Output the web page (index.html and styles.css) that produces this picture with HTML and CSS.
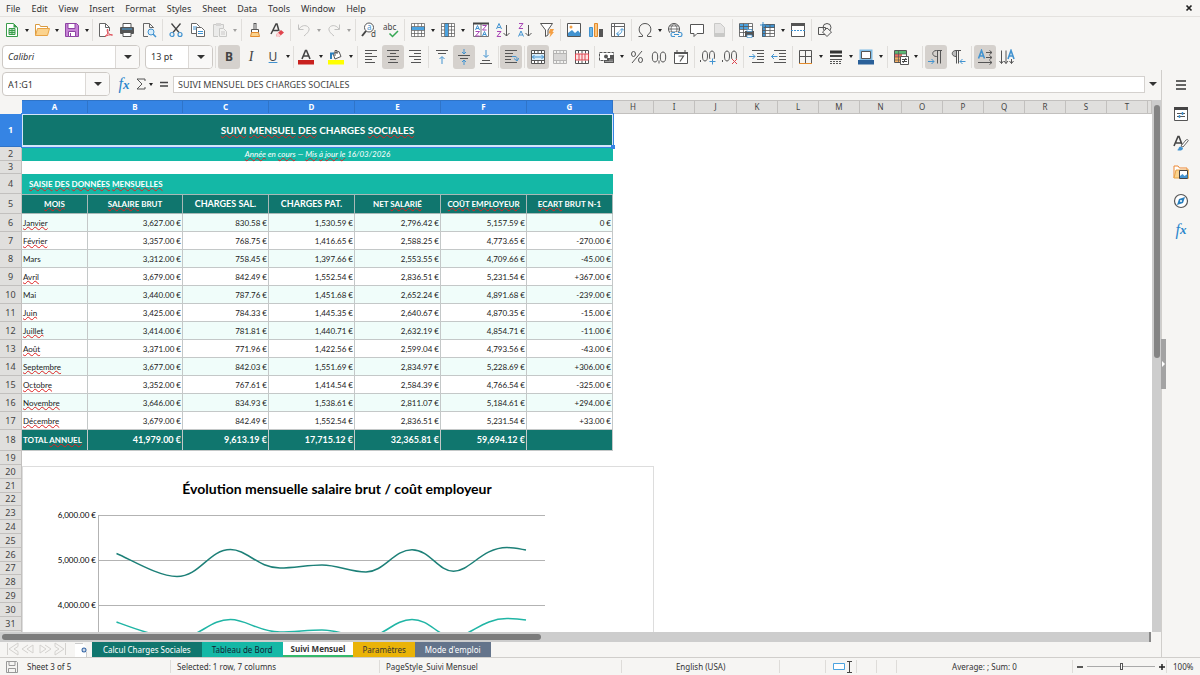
FILE: index.html
```html
<!DOCTYPE html>
<html lang="en">
<head>
    <meta charset="UTF-8">
    <meta name="viewport" content="width=device-width, initial-scale=1.0">
    <title>Suivi Mensuel - Calc</title>
    <link rel="stylesheet" href="styles.css">
</head>
<body>
    <!-- Menu bar -->
    <nav class="menubar">
        <button>File</button>
        <button>Edit</button>
        <button>View</button>
        <button>Insert</button>
        <button>Format</button>
        <button>Styles</button>
        <button>Sheet</button>
        <button>Data</button>
        <button>Tools</button>
        <button>Window</button>
        <button>Help</button>
        <button class="close" aria-label="Close"><svg viewBox="0 0 8 8" width="8" height="8"><path d="M1.5 1.5l5 5M6.5 1.5l-5 5" stroke="#222" stroke-width="1.7"/></svg></button>
    </nav>

    <!-- Standard toolbar -->
    <div class="toolbar toolbar-standard">
        <button class="tool" aria-label="New"><svg class="icon" viewBox="0 0 16 16"><path d="M2.5 1.5h7l4 4v9h-11z" fill="#fff" stroke="#3a9c4b"/><path d="M9.5 1.5v4h4z" fill="#3a9c4b"/><path d="M5 6.5h6v6H5zM5 8.5h6M5 10.5h6M8 6.5v6" fill="#bfe6c4" stroke="#3a9c4b"/></svg></button>
        <button class="drop" aria-label="New options"></button>
        <button class="tool" aria-label="Open"><svg class="icon" viewBox="0 0 16 16"><path d="M1.5 13.5v-11h4l1 2h7v3" fill="#fff" stroke="#d99b40"/><path d="M1.5 13.5l2-7h12l-2 7z" fill="#fbd38e" stroke="#e8a344"/></svg></button>
        <button class="drop" aria-label="Open options"></button>
        <button class="tool" aria-label="Save"><svg class="icon" viewBox="0 0 16 16"><path d="M1.5 1.5h11l2 2v11h-13z" fill="#c783d6" stroke="#8e44a3"/><path d="M4 1.5h7v5H4zM4.5 9.5h7v5h-7z" fill="#fff" stroke="#8e44a3"/><path d="M6 11h1v3H6z" fill="#8e44a3"/></svg></button>
        <button class="drop" aria-label="Save options"></button>
        <span class="sep tight"></span>
        <button class="tool" aria-label="Export as PDF"><svg class="icon" viewBox="0 0 16 16"><path d="M12.5 9V5.5l-4-4h-6v13H8" fill="#fff" stroke="#666"/><path d="M8.5 1.5v4h4" fill="none" stroke="#666"/><path d="M8 14.5c4-3 3-6 2.500-7.500-1.500 3 2 6 5 6-3-.5-5 0-7.500 1.500z" fill="#fff" stroke="#dd4650"/></svg></button>
        <button class="tool" aria-label="Print"><svg class="icon" viewBox="0 0 16 16"><path d="M4 1.5h8v4H4z" fill="#fff" stroke="#555"/><rect x="1" y="5" width="14" height="7" rx="1" fill="#555"/><path d="M3 7h10" stroke="#4ba3e0"/><path d="M4 10.5h8v4H4z" fill="#fff" stroke="#555"/></svg></button>
        <button class="tool" aria-label="Print preview"><svg class="icon" viewBox="0 0 16 16"><path d="M12.5 6V5.5l-4-4h-6v13H7M8.5 1.5v4h4" fill="none" stroke="#666"/><circle cx="10" cy="10" r="3" fill="#d8edfb" stroke="#4293d0"/><path d="M12 12l3 3" stroke="#4293d0" stroke-width="1.5"/></svg></button>
        <span class="sep"></span>
        <button class="tool" aria-label="Cut"><svg class="icon" viewBox="0 0 16 16"><path d="M3.5 1.5l7.500 9M12.5 1.5l-7.500 9" stroke="#444" stroke-width="1.3"/><circle cx="4" cy="12.5" r="2" fill="none" stroke="#4293d0" stroke-width="1.2"/><circle cx="12" cy="12.5" r="2" fill="none" stroke="#4293d0" stroke-width="1.2"/></svg></button>
        <button class="tool" aria-label="Copy"><svg class="icon" viewBox="0 0 16 16"><path d="M1.5 1.5h5l3 3v7h-8z" fill="#fff" stroke="#666"/><path d="M3 5h4M3 7h3" stroke="#4293d0"/><path d="M6.5 5.5h5l3 3v6h-8z" fill="#fff" stroke="#666"/><path d="M8 9.5h5M8 11.5h5" stroke="#4293d0"/></svg></button>
        <button class="tool off" aria-label="Paste"><svg class="icon" viewBox="0 0 16 16"><path d="M6 14.5H1.5v-12h10V6" fill="#ddd" stroke="#888"/><path d="M4 1h5v3H4z" fill="#aaa"/><path d="M7.5 6.5h4l3 3v5h-7zM9 10h4M9 12h4" fill="#eee" stroke="#888"/></svg></button>
        <button class="drop off" aria-label="Paste options"></button>
        <span class="sep"></span>
        <button class="tool" aria-label="Clone formatting"><svg class="icon" viewBox="0 0 16 16"><path d="M8 1v6" stroke="#555" stroke-width="3"/><path d="M8 2v5" stroke="#fff"/><path d="M4.5 7.5h7v3h-7z" fill="#fff" stroke="#555"/><path d="M4.5 10.5h7l1 4h-9z" fill="#fbd38e" stroke="#e38b2c"/></svg></button>
        <button class="tool" aria-label="Clear formatting"><svg class="icon" viewBox="0 0 16 16"><path d="M2 12L7 2h1l2 7M4 8.5h5" fill="none" stroke="#444" stroke-width="1.5"/><path d="M7 12.5l5-4.500 3 2.500-5 4.500H8z" fill="#e0454d"/><path d="M7 12.5l2-2 3 3-2 1.500H8z" fill="#fbd0d2"/></svg></button>
        <span class="sep"></span>
        <button class="tool off" aria-label="Undo"><svg class="icon" viewBox="0 0 16 16"><path d="M2.5 2.5v5h5M3 7c4-6 11-3 10 1-.5 2-2 3.500-5 6" fill="none" stroke="#777"/></svg></button>
        <button class="drop off" aria-label="Undo options"></button>
        <button class="tool off" aria-label="Redo"><svg class="icon" viewBox="0 0 16 16"><path d="M13.5 2.5v5h-5M13 7C9 1 2 4 3 8c.5 2 2 3.500 5 6" fill="none" stroke="#777"/></svg></button>
        <button class="drop off" aria-label="Redo options"></button>
        <span class="sep"></span>
        <button class="tool" aria-label="Find and replace"><svg class="icon" viewBox="0 0 16 16"><circle cx="8" cy="5.5" r="4.5" fill="#fff" stroke="#555"/><path d="M5 9l-4 5" stroke="#444" stroke-width="2"/><text x="6" y="8" class="glyph-a">a</text><text x="10" y="15" class="glyph-d">d</text></svg></button>
        <button class="tool" aria-label="Spelling"><svg class="icon" viewBox="0 0 16 16"><text x="0" y="8" class="glyph-abc">abc</text><path d="M6.5 11.5l3 3L15 9" fill="none" stroke="#35a853" stroke-width="1.5"/></svg></button>
        <span class="sep"></span>
        <button class="tool" aria-label="Row"><svg class="icon" viewBox="0 0 16 16"><path d="M1.5 1.5h13v13h-13z" fill="#fff"/><path d="M1 5h14v3H1z" fill="#4ba3e0"/><path d="M1.5 1.5h13v13h-13zM1.5 4.5h13M1.5 8.5h13M1.5 11.5h13M4.5 1.5v3M8 1.5v3M11.5 1.5v3M4.5 8.5v6M8 8.5v6M11.5 8.5v6" fill="none" stroke="#555" stroke-width=".7"/></svg></button>
        <button class="drop" aria-label="Row options"></button>
        <button class="tool" aria-label="Column"><svg class="icon" viewBox="0 0 16 16"><path d="M1.5 1.5h13v13h-13z" fill="#fff"/><path d="M5 1h3.500v14H5z" fill="#4ba3e0"/><path d="M1.5 1.5h13v13h-13zM4.5 1.5v13M8.5 1.5v13M11.5 1.5v13M1.5 4.5h3M1.5 8h3M1.5 11.5h3M8.5 4.5h6M8.5 8h6M8.5 11.5h6" fill="none" stroke="#555" stroke-width=".7"/></svg></button>
        <button class="drop" aria-label="Column options"></button>
        <span class="sep tight clear"></span>
        <button class="tool" aria-label="Sort"><svg class="icon" viewBox="0 0 16 16"><path d="M.5 1.5h15v13H.5zM8 1.5v13" fill="#fff" stroke="#555" stroke-width=".8"/><path d="M0 1.5h16" stroke="#444" stroke-width="2"/><path d="M2.5 8L4.5 3.500 6.500 8M3 6.5h3M9.5 14L11.5 9.5l2 4.500M10 12.5h3" fill="none" stroke="#4293d0"/><path d="M2.5 9.5h4l-4 4.500h4M9.5 3.5h4l-4 4.500h4" fill="none" stroke="#a846b5"/></svg></button>
        <button class="tool" aria-label="Sort ascending"><svg class="icon" viewBox="0 0 16 16"><path d="M1.5 7L4 1.5 6.500 7M2.5 5.5h3" fill="none" stroke="#4293d0"/><path d="M2 9.5h4l-4 5h4" fill="none" stroke="#a846b5"/><path d="M11.5 3v11M8.5 11l3 3 3-3" fill="none" stroke="#555"/></svg></button>
        <button class="tool" aria-label="Sort descending"><svg class="icon" viewBox="0 0 16 16"><path d="M1.5 14.5L4 9l2.500 5.500M2.5 13h3" fill="none" stroke="#4293d0"/><path d="M2 1.5h4l-4 5h4" fill="none" stroke="#a846b5"/><path d="M11.5 3v11M8.5 11l3 3 3-3" fill="none" stroke="#555"/></svg></button>
        <button class="tool" aria-label="AutoFilter"><svg class="icon" viewBox="0 0 16 16"><path d="M1.5 1.5h12L9 8v5l-2.500 1.500V8z" fill="#fff" stroke="#555"/><path d="M11 7h4l-1.500 3H15l-4.500 5.500 1-4H9.500z" fill="#f5a044"/></svg></button>
        <span class="sep"></span>
        <button class="tool" aria-label="Insert image"><svg class="icon" viewBox="0 0 16 16"><path d="M1.5 1.5h13v13h-13z" fill="#fff" stroke="#555"/><path d="M2 14v-3l4-3 3 3 3-2.500 2.500 3V14z" fill="#4293d0"/><circle cx="5" cy="5" r="1.5" fill="#f5a044"/></svg></button>
        <button class="tool" aria-label="Insert chart"><svg class="icon" viewBox="0 0 16 16"><path d="M1.5 5.5h3v9h-3z" fill="#6db8ea" stroke="#4293d0"/><path d="M6.5 1.5h3v13h-3z" fill="#fbc681" stroke="#e38b2c"/><path d="M11 7h4v8h-4z" fill="#555"/></svg></button>
        <button class="tool" aria-label="Pivot table"><svg class="icon" viewBox="0 0 16 16"><path d="M1.5 1.5h13v13h-13zM1.5 4.5h13M4.5 1.5v13" fill="#fff" stroke="#666"/><path d="M7 12c3 1 5-1 5-5M10 8.5l2-2 2 2M9 14l-2.500-2L9 9.500" fill="none" stroke="#4293d0"/></svg></button>
        <span class="sep"></span>
        <button class="tool" aria-label="Special character"><svg class="icon" viewBox="0 0 16 16"><path d="M1.5 14.5h4v-1.500C0 10 1.500 1.500 8 1.500s8 8.500 2.500 11.500v1.500h4" fill="none" stroke="#555"/></svg></button>
        <button class="drop" aria-label="Special character options"></button>
        <button class="tool" aria-label="Hyperlink"><svg class="icon" viewBox="0 0 16 16"><circle cx="7" cy="7" r="5.5" fill="#fff" stroke="#555"/><path d="M1.5 7h11M2.5 4h9M2.5 10h9M7 1.5c-4 4-4 7 0 11M7 1.5c4 4 4 7 0 11" fill="none" stroke="#555" stroke-width=".8"/><path d="M3 10h13v5H3z" fill="#f6f5f3"/><path d="M8 10.5H5.500c-2 0-2 4 0 4H8M11 10.5h2.500c2 0 2 4 0 4H11M7 12.5h5" fill="none" stroke="#4293d0" stroke-width="1.2"/></svg></button>
        <button class="tool" aria-label="Comment"><svg class="icon" viewBox="0 0 16 16"><path d="M1.5 2.5h13v9H8l-3 3v-3H1.500z" fill="#fff" stroke="#555"/></svg></button>
        <button class="tool off" aria-label="Headers and footers"><svg class="icon" viewBox="0 0 16 16"><path d="M3.5 1.5h6l4 4v9h-10z" fill="#ccc" stroke="#888"/><path d="M4 11h9v3H4z" fill="#888"/></svg></button>
        <span class="sep"></span>
        <button class="tool" aria-label="Print area"><svg class="icon" viewBox="0 0 16 16"><path d="M1.5 1.5h13v13h-13z" fill="#fff"/><path d="M1 2h9v5H1z" fill="#4ba3e0"/><path d="M1.5 1.5h13v13h-13zM1.5 4.5h13M1.5 7.5h13M1.5 10.5h13M5.5 1.5v13M10.5 1.5v13" fill="none" stroke="#555" stroke-width=".8"/><path d="M7 9h9v6H7z" fill="#555"/><path d="M9 7.5h5v2H9zM9 13h5v2.500H9z" fill="#fff" stroke="#4293d0" stroke-width=".7"/></svg></button>
        <button class="tool" aria-label="Freeze rows and columns"><svg class="icon" viewBox="0 0 16 16"><path d="M2.5 2.5h13v13h-13z" fill="#fff"/><path d="M2 2h13v4H2zM2 5h3v10H2z" fill="#4293d0"/><path d="M2.5 2.5h12v12h-12zM2.5 5.5h12M2.5 8.5h12M2.5 11.5h12M5.5 2.5v12M10 2.5v12" fill="none" stroke="#555" stroke-width=".8"/><path d="M3 0v6M0 3h6" stroke="#4293d0"/></svg></button>
        <button class="drop" aria-label="Freeze options"></button>
        <button class="tool" aria-label="Split window"><svg class="icon" viewBox="0 0 16 16"><path d="M1.5 1.5h13v13h-13z" fill="#fff" stroke="#555"/><path d="M1 2.5h14" stroke="#555" stroke-width="3"/><path d="M1 8.5h14" stroke="#4293d0" stroke-dasharray="2 1"/></svg></button>
        <span class="sep"></span>
        <button class="tool" aria-label="Show draw functions"><svg class="icon" viewBox="0 0 16 16"><circle cx="10" cy="5.5" r="4" fill="none" stroke="#555"/><path d="M1.5 5.5h7v7h-7z" fill="none" stroke="#555"/><path d="M10 6l4.500 4L10 14.500 5.500 10z" fill="#f6f5f3" stroke="#555"/></svg></button>
    </div>

    <!-- Formatting toolbar -->
    <div class="toolbar">
        <div class="combo combo-font">
            <input type="text" value="Calibri" aria-label="Font name">
            <button aria-label="Font list"></button>
        </div>
        <div class="combo combo-size">
            <input type="text" value="13 pt" aria-label="Font size">
            <button aria-label="Size list"></button>
        </div>
        <span class="sep"></span>
        <button class="tool on letter" aria-label="Bold"><b>B</b></button>
        <button class="tool letter" aria-label="Italic"><i>I</i></button>
        <button class="tool letter" aria-label="Underline"><u>U</u></button>
        <button class="drop" aria-label="Underline options"></button>
        <span class="sep tight"></span>
        <button class="tool" aria-label="Font color"><svg class="icon" viewBox="0 0 16 16"><path d="M4 10L7.5 1.500h1L12 10M5.5 7h5" fill="none" stroke="#444" stroke-width="1.6"/><path d="M0 11h16v4.500H0z" fill="#c9211e"/></svg></button>
        <button class="drop" aria-label="Font colors"></button>
        <button class="tool" aria-label="Background color"><svg class="icon" viewBox="0 0 16 16"><path d="M5 4.5l6-2 2 5-6 2.500z" fill="#fff" stroke="#555"/><path d="M7 7V1.500h2V5" fill="none" stroke="#555"/><path d="M3 10V4.500h3" fill="none" stroke="#2a7fbd" stroke-width="2"/><path d="M0 11h16v4.500H0z" fill="#ff0"/></svg></button>
        <button class="drop" aria-label="Background colors"></button>
        <span class="sep"></span>
        <button class="tool" aria-label="Align left"><svg class="icon" viewBox="0 0 16 16"><path d="M2 1.5h12M2 4.5h7M2 7.5h12M2 10.5h7M2 13.5h10" stroke="#555"/></svg></button>
        <button class="tool on" aria-label="Center horizontally"><svg class="icon" viewBox="0 0 16 16"><path d="M2 1.5h12M5 4.5h6M2 7.5h12M5 10.5h6M3 13.5h10" stroke="#555"/></svg></button>
        <button class="tool" aria-label="Align right"><svg class="icon" viewBox="0 0 16 16"><path d="M2 1.5h12M7 4.5h7M2 7.5h12M7 10.5h7M4 13.5h10" stroke="#555"/></svg></button>
        <span class="sep"></span>
        <button class="tool" aria-label="Align top"><svg class="icon" viewBox="0 0 16 16"><path d="M2 1.5h12M4 4.5h8" stroke="#555"/><path d="M8 15V8M5.5 10L8 7.500l2.500 2.500" fill="none" stroke="#4293d0"/></svg></button>
        <button class="tool on" aria-label="Center vertically"><svg class="icon" viewBox="0 0 16 16"><path d="M2 6.5h12M4 9.5h8" stroke="#555"/><path d="M8 0v5M6 3l2 2 2-2M8 16v-5M6 13l2-2 2 2" fill="none" stroke="#4293d0"/></svg></button>
        <button class="tool" aria-label="Align bottom"><svg class="icon" viewBox="0 0 16 16"><path d="M4 11.5h8M2 14.5h12" stroke="#555"/><path d="M8 1v7M5.5 6L8 8.500 10.500 6" fill="none" stroke="#4293d0"/></svg></button>
        <span class="sep tight"></span>
        <button class="tool on" aria-label="Wrap text"><svg class="icon" viewBox="0 0 16 16"><path d="M2 1.5h12M2 4.5h8M2 7.5h7M2 10.5h6M2 13.5h12" stroke="#555"/><path d="M9 7.5h3c2 0 2 1 2 4M11 9.5l3 2.500 2-3" fill="none" stroke="#4293d0"/></svg></button>
        <span class="sep"></span>
        <button class="tool on" aria-label="Merge and center"><svg class="icon" viewBox="0 0 16 16"><path d="M1.5 1.5h13v13h-13zM1.5 4.5h13M1.5 11.5h13M4.5 1.5v3M8 1.5v3M11.5 1.5v3M4.5 11.5v3M8 11.5v3M11.5 11.5v3" fill="#fff" stroke="#555"/><path d="M2 5h12v6H2z" fill="#d8edfb"/><path d="M2 8h12M4.5 6l-2 2 2 2M11.5 6l2 2-2 2" fill="none" stroke="#4293d0"/></svg></button>
        <button class="tool off" aria-label="Merge cells"><svg class="icon" viewBox="0 0 16 16"><path d="M1.5 1.5h13v13h-13zM1.5 4.5h13M1.5 11.5h13M4.5 1.5v3M8 1.5v3M11.5 1.5v3M4.5 11.5v3M8 11.5v3M11.5 11.5v3" fill="#eee" stroke="#555"/><path d="M2 5h12v6H2z" fill="#aaa"/></svg></button>
        <button class="tool" aria-label="Unmerge cells"><svg class="icon" viewBox="0 0 16 16"><path d="M1.5 1.5h13v13h-13zM4.5 1.5v3M8 1.5v3M11.5 1.5v3M4.5 11.5v3M8 11.5v3M11.5 11.5v3" fill="#fff" stroke="#555"/><path d="M1.5 5h13v6h-13zM5 5v6M8 5v6M11 5v6" fill="#fde4e4" stroke="#dd4650"/></svg></button>
        <span class="sep tight"></span>
        <button class="tool" aria-label="Currency"><svg class="icon" viewBox="0 0 16 16"><path d="M.5 3.500h14v8H.5z" fill="#fff" stroke="#555" stroke-dasharray="3 1"/><circle cx="7" cy="7.5" r="2" fill="#555"/><path d="M5 11h3V9h3V6h4v8H5z" fill="#555"/><path d="M6 12.5h8M10 11h4" stroke="#bbb" stroke-width=".7"/></svg></button>
        <button class="drop" aria-label="Currency options"></button>
        <button class="tool" aria-label="Percent"><svg class="icon" viewBox="0 0 16 16"><path d="M13 2L3 14" stroke="#555"/><ellipse cx="4.5" cy="5" rx="2" ry="2.5" fill="none" stroke="#555"/><ellipse cx="11.5" cy="11" rx="2" ry="2.5" fill="none" stroke="#555"/></svg></button>
        <button class="tool" aria-label="Number"><svg class="icon" viewBox="0 0 16 16"><ellipse cx="4" cy="8" rx="2.7" ry="5" fill="none" stroke="#555"/><ellipse cx="12" cy="8" rx="2.7" ry="5" fill="none" stroke="#555"/><path d="M8 11.5v3" stroke="#555"/></svg></button>
        <button class="tool" aria-label="Date"><svg class="icon" viewBox="0 0 16 16"><path d="M1.5 3.5h13v11h-13z" fill="#fff" stroke="#555"/><path d="M1 4h14" stroke="#555" stroke-width="2"/><path d="M4 1v3M12 1v3" stroke="#555"/><path d="M5.5 7h5L7 12.500" fill="none" stroke="#555" stroke-width="1.2"/></svg></button>
        <span class="sep"></span>
        <button class="tool" aria-label="Add decimal place"><svg class="icon" viewBox="0 0 16 16"><path d="M.5 11v2" stroke="#555"/><ellipse cx="5" cy="7" rx="2.5" ry="5" fill="none" stroke="#555"/><ellipse cx="12" cy="7" rx="2.5" ry="5" fill="none" stroke="#555"/><path d="M9 10h7v6H9z" fill="#f6f5f3"/><path d="M12.5 9.5v6M9.5 12.5h6" stroke="#4293d0"/></svg></button>
        <button class="tool" aria-label="Delete decimal place"><svg class="icon" viewBox="0 0 16 16"><path d="M.5 11v2" stroke="#555"/><ellipse cx="5" cy="7" rx="2.5" ry="5" fill="none" stroke="#555"/><ellipse cx="12" cy="7" rx="2.5" ry="5" fill="none" stroke="#555"/><path d="M9 10h7v6H9z" fill="#f6f5f3"/><path d="M10 10l5 5M15 10l-5 5" stroke="#dd4650"/></svg></button>
        <span class="sep"></span>
        <button class="tool" aria-label="Increase indent"><svg class="icon" viewBox="0 0 16 16"><path d="M3 1.5h12M8 4.5h7M8 7.5h7M8 10.5h7M3 13.5h12" stroke="#555"/><path d="M0 7.5h6M3.5 5L6 7.500 3.500 10" fill="none" stroke="#4293d0"/></svg></button>
        <button class="tool" aria-label="Decrease indent"><svg class="icon" viewBox="0 0 16 16"><path d="M3 1.5h12M8 4.5h7M8 7.5h7M8 10.5h7M3 13.5h12" stroke="#555"/><path d="M6.5 7.5h-6M3 5L.5 7.500 3 10" fill="none" stroke="#4293d0"/></svg></button>
        <span class="sep"></span>
        <button class="tool" aria-label="Borders"><svg class="icon" viewBox="0 0 16 16"><path d="M1.5 14V1.500h12V14M1.5 7.5h12M7.5 1.5V14" fill="none" stroke="#555"/><path d="M1 14.5h13" stroke="#e38b2c"/></svg></button>
        <button class="drop" aria-label="Border options"></button>
        <button class="tool" aria-label="Border style"><svg class="icon" viewBox="0 0 16 16"><path d="M2 3h12" stroke="#333" stroke-width="3"/><path d="M2 7h12" stroke="#444" stroke-width="2"/><path d="M2 10.5h12" stroke="#555"/><path d="M2 12.5h12M2 14.5h12" stroke="#555" stroke-dasharray="2 1"/></svg></button>
        <button class="drop" aria-label="Border styles"></button>
        <button class="tool" aria-label="Border color"><svg class="icon" viewBox="0 0 16 16"><path d="M2.5 1.5h11v9h-11z" fill="#fff" stroke="#7fbce6" stroke-width="2"/><path d="M3.5 2.5h9v7h-9z" fill="none" stroke="#555"/><path d="M0 11h16v4.500H0z" fill="#2a6099"/></svg></button>
        <button class="drop" aria-label="Border colors"></button>
        <span class="sep"></span>
        <button class="tool" aria-label="Conditional formatting"><svg class="icon" viewBox="0 0 16 16"><path d="M1.5 1.5h12v12h-12z" fill="#fff" stroke="#555"/><path d="M2 2h11v3H2z" fill="#5cb874"/><path d="M2 5h7v3H2z" fill="#ee6c66"/><path d="M2 8h5v5H2z" fill="#f7b266"/><path d="M5.5 1.5v12M1.5 5h12M1.5 8h12M1.5 11h12" fill="none" stroke="#555" stroke-width=".7"/><path d="M7.5 7.5h8v8h-8z" fill="#fff" stroke="#555"/><path d="M9 10.5h5M9 12.5h5M13 9l-3 5" stroke="#444"/></svg></button>
        <button class="drop" aria-label="Conditional options"></button>
        <span class="sep"></span>
        <button class="tool on" aria-label="Left-to-right"><svg class="icon" viewBox="0 0 16 16"><path d="M14 1.5H8.500c-5 0-5 6 0 6h1M9.5 1.5v13M12.5 1.5v13" fill="none" stroke="#555"/><path d="M0 12.5h6M3.5 10L6 12.500 3.500 15" fill="none" stroke="#4293d0"/></svg></button>
        <button class="tool" aria-label="Right-to-left"><svg class="icon" viewBox="0 0 16 16"><path d="M6.5 1.500C1 1.500 1 7.500 6.500 7.500z" fill="#bbb"/><path d="M11 1.5H6c-5 0-5 6 0 6M6.5 1.5v13M8.5 1.5v13" fill="none" stroke="#555"/><path d="M15.5 12.5H10M12.5 10L10 12.500l2.500 2.500" fill="none" stroke="#4293d0"/></svg></button>
        <span class="sep"></span>
        <button class="tool on" aria-label="Text direction from left to right"><svg class="icon" viewBox="0 0 16 16"><path d="M1.5 9.5L4.500 1.500 7.500 9.500M2.5 7h4" fill="none" stroke="#4293d0" stroke-width="1.6"/><path d="M9 3.5h6M9 8.5h6M1 13.5h14M12.5 1.5l2.500 2-2.500 2M12.5 6.500L15 8.500l-2.500 2M12.5 11.5l2.500 2-2.500 2" fill="none" stroke="#555"/></svg></button>
        <button class="tool" aria-label="Text direction from top to bottom"><svg class="icon" viewBox="0 0 16 16"><path d="M9 10L12 1.500 15 10M10 7h4" fill="none" stroke="#4293d0" stroke-width="1.6"/><path d="M2.5 1.5v13M7 1.5v13M12.5 10v4.500M.5 12l2 2.500 2-2.500M5 12l2 2.500L9 12M10.5 12l2 2.500 2-2.500" fill="none" stroke="#555"/></svg></button>
    </div>

    <div class="work">
        <main class="main">
            <!-- Name box and input line -->
            <div class="formula-bar">
                <div class="combo combo-name">
                    <input type="text" value="A1:G1" aria-label="Name box">
                    <button aria-label="Named ranges"></button>
                </div>
                <button class="fx" aria-label="Function wizard"><i>f</i><i>x</i></button>
                <button class="small-tool" aria-label="Sum"><svg width="10" height="14" viewBox="0 0 10 14"><path d="M9 4V2H1l5 5-5 5h8v-2" fill="none" stroke="#555"/></svg></button>
                <button class="drop" aria-label="Sum options"></button>
                <button class="small-tool" aria-label="Formula"><svg width="10" height="14" viewBox="0 0 10 14"><path d="M1 5.5h8M1 9h8" stroke="#444" stroke-width="1.5"/></svg></button>
                <input class="formula-input" type="text" value="SUIVI MENSUEL DES CHARGES SOCIALES" aria-label="Input line">
                <button class="expand" aria-label="Expand formula bar"></button>
            </div>

            <div class="sheet-area">
                <div class="sheet">
                    <table class="grid">
                        <colgroup>
                            <col class="c-head"><col class="c-a"><col class="c-b"><col class="c-data"><col class="c-data"><col class="c-data"><col class="c-data"><col class="c-data">
                            <col class="c-empty"><col class="c-empty"><col class="c-empty-wide"><col class="c-empty"><col class="c-empty"><col class="c-empty"><col class="c-empty-wide"><col class="c-empty"><col class="c-empty"><col class="c-empty"><col class="c-empty"><col class="c-empty"><col class="c-empty"><col>
                        </colgroup>
                        <thead>
                            <tr class="letters">
                                <td></td>
                                <th class="sel">A</th><th class="sel">B</th><th class="sel">C</th><th class="sel">D</th><th class="sel">E</th><th class="sel">F</th><th class="sel">G</th>
                                <th>H</th><th>I</th><th>J</th><th>K</th><th>L</th><th>M</th><th>N</th><th>O</th><th>P</th><th>Q</th><th>R</th><th>S</th><th>T</th><th></th>
                            </tr>
                        </thead>
                        <tbody>
                            <tr class="r-title"><th class="sel">1</th><td colspan="7" class="title"><s>SUIVI</s> <s>MENSUEL</s> <s>DES</s> CHARGES <s>SOCIALES</s></td></tr>
                            <tr><th>2</th><td colspan="7" class="subtitle"><s>Année</s> en <s>cours</s> — <s>Mis</s> <s>à</s> <s>jour</s> <s>le</s> 16/03/2026</td></tr>
                            <tr class="r-short"><th>3</th></tr>
                            <tr class="r-head"><th>4</th><td colspan="7" class="section"><s>SAISIE</s> <s>DES</s> <s>DONNÉES</s> <s>MENSUELLES</s></td></tr>
                            <tr class="r-head heads"><th>5</th><td><s>MOIS</s></td><td><s>SALAIRE</s> BRUT</td><td class="big">CHARGES SAL.</td><td class="big">CHARGES PAT.</td><td>NET <s>SALARIÉ</s></td><td><s>COÛT</s> <s>EMPLOYEUR</s></td><td><s>ECART</s> BRUT N-1</td></tr>
                            <tr class="data"><th>6</th><td><s>Janvier</s></td><td>3,627.00 €</td><td>830.58 €</td><td>1,530.59 €</td><td>2,796.42 €</td><td>5,157.59 €</td><td>0 €</td></tr>
                            <tr class="data"><th>7</th><td><s>Février</s></td><td>3,357.00 €</td><td>768.75 €</td><td>1,416.65 €</td><td>2,588.25 €</td><td>4,773.65 €</td><td>-270.00 €</td></tr>
                            <tr class="data"><th>8</th><td>Mars</td><td>3,312.00 €</td><td>758.45 €</td><td>1,397.66 €</td><td>2,553.55 €</td><td>4,709.66 €</td><td>-45.00 €</td></tr>
                            <tr class="data"><th>9</th><td><s>Avril</s></td><td>3,679.00 €</td><td>842.49 €</td><td>1,552.54 €</td><td>2,836.51 €</td><td>5,231.54 €</td><td>+367.00 €</td></tr>
                            <tr class="data"><th>10</th><td>Mai</td><td>3,440.00 €</td><td>787.76 €</td><td>1,451.68 €</td><td>2,652.24 €</td><td>4,891.68 €</td><td>-239.00 €</td></tr>
                            <tr class="data"><th>11</th><td><s>Juin</s></td><td>3,425.00 €</td><td>784.33 €</td><td>1,445.35 €</td><td>2,640.67 €</td><td>4,870.35 €</td><td>-15.00 €</td></tr>
                            <tr class="data"><th>12</th><td><s>Juillet</s></td><td>3,414.00 €</td><td>781.81 €</td><td>1,440.71 €</td><td>2,632.19 €</td><td>4,854.71 €</td><td>-11.00 €</td></tr>
                            <tr class="data"><th>13</th><td><s>Août</s></td><td>3,371.00 €</td><td>771.96 €</td><td>1,422.56 €</td><td>2,599.04 €</td><td>4,793.56 €</td><td>-43.00 €</td></tr>
                            <tr class="data"><th>14</th><td><s>Septembre</s></td><td>3,677.00 €</td><td>842.03 €</td><td>1,551.69 €</td><td>2,834.97 €</td><td>5,228.69 €</td><td>+306.00 €</td></tr>
                            <tr class="data"><th>15</th><td><s>Octobre</s></td><td>3,352.00 €</td><td>767.61 €</td><td>1,414.54 €</td><td>2,584.39 €</td><td>4,766.54 €</td><td>-325.00 €</td></tr>
                            <tr class="data"><th>16</th><td><s>Novembre</s></td><td>3,646.00 €</td><td>834.93 €</td><td>1,538.61 €</td><td>2,811.07 €</td><td>5,184.61 €</td><td>+294.00 €</td></tr>
                            <tr class="data"><th>17</th><td><s>Décembre</s></td><td>3,679.00 €</td><td>842.49 €</td><td>1,552.54 €</td><td>2,836.51 €</td><td>5,231.54 €</td><td>+33.00 €</td></tr>
                            <tr class="total"><th>18</th><td>TOTAL <s>ANNUEL</s></td><td>41,979.00 €</td><td>9,613.19 €</td><td>17,715.12 €</td><td>32,365.81 €</td><td>59,694.12 €</td><td></td></tr>
                            <tr><th>19</th></tr>
                            <tr><th>20</th></tr>
                            <tr><th>21</th></tr>
                            <tr class="r-short"><th>22</th></tr>
                            <tr><th>23</th></tr>
                            <tr><th>24</th></tr>
                            <tr><th>25</th></tr>
                            <tr><th>26</th></tr>
                            <tr class="r-short"><th>27</th></tr>
                            <tr><th>28</th></tr>
                            <tr><th>29</th></tr>
                            <tr><th>30</th></tr>
                            <tr><th>31</th></tr>
                            <tr><th></th></tr>
                        </tbody>
                    </table>

                    <!-- Chart floating over the cells -->
                    <svg class="chart" viewBox="22 466 632 200" width="632" height="200">
                        <rect x="22.5" y="466.5" width="631" height="210" fill="#fff" stroke="#ddd"/>
                        <text x="337" y="494" class="chart-title">Évolution mensuelle salaire brut / coût employeur</text>
                        <path d="M98 515.5h447M98 560.5h447M98 605.5h447M98.5 515v160" fill="none" stroke="#b3b3b3"/>
                        <text x="96" y="518" class="chart-label">6,000.00 €</text>
                        <text x="96" y="563" class="chart-label">5,000.00 €</text>
                        <text x="96" y="608" class="chart-label">4,000.00 €</text>
                        <path class="line-cost" d="M116.5 553.5C130 559 158 576.5 177 576.5C200 576.5 209 549.5 230.5 549.5C247 549.5 258 568 280 568C294 568 308 565 322 565C338 565 350 572 366 572C384 572 394 549.7 412 549.7C430 549.7 438 571.3 453.5 571.3C470 571.3 482 547.5 507 547.5C513 547.5 520 549 526 550"/>
                        <path class="line-gross" d="M116.5 622C130 627 158 638 177 638C200 638 209 619.5 230.5 619.5C247 619.5 258 632 280 632C294 632 308 630 322 630C338 630 350 637 366 637C384 637 394 619.5 412 619.5C430 619.5 438 637 453.5 637C470 637 482 618.5 507 618.5C513 618.5 520 619 526 620"/>
                    </svg>
                </div>
                <div class="vscroll"><div class="vthumb"></div></div>
            </div>

            <div class="hscroll"><div class="hthumb"></div></div>

            <!-- Sheet tabs -->
            <div class="tabs">
                <div class="tab-nav" aria-hidden="true">
                    <svg width="61" height="14" viewBox="0 0 61 14"><path d="M1.5 1v12M12 1L3 7l9 6V9.500L8 7l4-2.500zM22 3l-6 4 6 4M27 3l-6 4 6 4V3M34 3l6 4-6 4V3M39 3l6 4-6 4M49 1l9 6-9 6V9.500L53 7l-4-2.500zM59.5 1v12" fill="none" stroke="#d4d2cf"/></svg>
                </div>
                <button class="tab-add" aria-label="Add sheet"><svg width="12" height="14" viewBox="0 0 12 14"><path d="M0 0h8l3 4v10H0z" fill="#fff"/><path d="M0 .5h8M11.5 9v5" stroke="#ccc"/><circle cx="9" cy="7" r="2.5" fill="#3465a4"/><path d="M9 5.500v3M7.5 7h3" stroke="#fff"/></svg></button>
                <button class="tab tab-dark">Calcul Charges Sociales</button>
                <button class="tab tab-teal">Tableau de Bord</button>
                <button class="tab tab-active">Suivi Mensuel</button>
                <button class="tab tab-yellow">Paramètres</button>
                <button class="tab tab-slate">Mode d'emploi</button>
            </div>
        </main>

        <!-- Sidebar deck buttons -->
        <aside class="sidebar">
            <button aria-label="Sidebar settings"><svg class="icon" viewBox="0 0 16 16"><path d="M3 4h10M3 8h10M3 12h10" stroke="#333" stroke-width="1.5"/></svg></button>
            <button aria-label="Properties"><svg class="icon" viewBox="0 0 16 16"><path d="M1.5 1.5h13v13h-13z" fill="#fff" stroke="#555"/><path d="M1 2.5h14" stroke="#444" stroke-width="3"/><path d="M4 7.5h8M4 10.5h8" stroke="#555"/><path d="M9.5 6v3M6.5 9v3" stroke="#4293d0" stroke-width="1.5"/></svg></button>
            <button aria-label="Styles"><svg class="icon" viewBox="0 0 16 16"><path d="M1 11L5 1.500h1l3 8M3 8h5" fill="none" stroke="#444" stroke-width="1.6"/><path d="M8 11l5-6c1-1 3 0 2 1l-5 6z" fill="#fff" stroke="#666"/><path d="M4 15c2 0 1-3 3.500-3.500L10 13c0 3-4 3-6 2z" fill="#4293d0"/></svg></button>
            <button aria-label="Gallery"><svg class="icon" viewBox="0 0 16 16"><path d="M1 14V2h4l1.500 2H14v3" fill="#fff" stroke="#ed8733"/><path d="M1 14l2-8h13v8z" fill="#fbd38e" stroke="#e8a344"/><path d="M6.5 6.5h8v8h-8z" fill="#fff" stroke="#444"/><path d="M7 14v-2l2.500-2 2 2 3-2v4z" fill="#4293d0"/></svg></button>
            <button aria-label="Navigator"><svg class="icon" viewBox="0 0 16 16"><circle cx="8" cy="8" r="6.5" fill="#fff" stroke="#555" stroke-width="1.2"/><path d="M12 4l-2 6-6 2 2-6z" fill="#2a7fbd"/><circle cx="8" cy="8" r="1" fill="#fff"/></svg></button>
            <button class="fx" aria-label="Functions"><i>f</i><i>x</i></button>
            <div class="handle"></div>
        </aside>
    </div>

    <!-- Status bar -->
    <footer class="status">
        <div class="st-sheet"><svg class="save-icon" viewBox="0 0 12 12" width="12" height="12"><path d="M.5.5h10l1 1v10H.5zM3 .5h6v4H3zM2.5 7.5h7v4h-7z" fill="none" stroke="#999"/></svg>Sheet 3 of 5</div>
        <div class="st-selected">Selected: 1 row, 7 columns</div>
        <div class="st-style">PageStyle_Suivi Mensuel</div>
        <div class="st-lang">English (USA)</div>
        <div class="st-insert"></div>
        <div class="st-mode"><svg width="19" height="12" viewBox="0 0 19 12"><path d="M.5 2.500h11v6H.5z" fill="#fff" stroke="#4ba3e0"/><path d="M14 .5h5M14 11.5h5M16.5.5v11" stroke="#444"/></svg></div>
        <div class="st-small"></div>
        <div class="st-small"></div>
        <div class="st-sum">Average: ; Sum: 0</div>
        <div class="st-zoom">
            <button aria-label="Zoom out"><svg width="8" height="8" viewBox="0 0 8 8"><path d="M1 4h6" stroke="#222" stroke-width="1.5"/></svg></button>
            <input type="range" min="0" max="200" value="100" aria-label="Zoom">
            <button aria-label="Zoom in"><svg width="8" height="8" viewBox="0 0 8 8"><path d="M1 4h6M4 1v6" stroke="#222" stroke-width="1.5"/></svg></button>
        </div>
        <div class="st-percent">100%</div>
    </footer>
</body>
</html>
```
FILE: styles.css
```css
* {
    margin: 0;
    padding: 0;
    box-sizing: border-box;
}

body {
    height: 100vh;
    display: flex;
    flex-direction: column;
    overflow: hidden;
    background: #f6f5f3;
    color: #333;
    font-family: "Noto Sans", sans-serif;
    font-size: 9px;
}

button,
input {
    font: inherit;
    color: inherit;
    border: none;
    background: none;
    min-width: 0;
}

svg {
    display: block;
}

/* Menu bar */
.menubar {
    display: flex;
    height: 17px;
    padding-left: 6px;
    gap: 11px;
    border-bottom: 1px solid #e4e2df;
}

.menubar .close {
    margin-left: auto;
    padding-right: 7px;
}

/* Toolbars */
.toolbar {
    display: flex;
    align-items: center;
    height: 27px;
    padding-left: 1px;
}

.toolbar-standard {
    height: 26px;
}

.tool {
    display: flex;
    align-items: center;
    justify-content: center;
    flex: none;
    width: 22px;
    height: 24px;
    border-radius: 3px;
}

.tool.on {
    background: #d5d1cd;
}

.off {
    opacity: 0.4;
}

.icon {
    width: 16px;
    height: 16px;
}

.drop {
    display: flex;
    align-items: center;
    justify-content: center;
    flex: none;
    width: 8px;
    height: 24px;
}

.drop::after {
    content: "";
    border: 2px solid transparent;
    border-top: 3px solid #222;
    border-bottom: none;
}

.sep {
    flex: none;
    width: 1px;
    height: 22px;
    margin: 0 2px;
    background: #e0dedb;
}

.sep.tight {
    margin: 0 1px;
}

.sep.clear {
    background: none;
}

.letter {
    font-size: 12px;
    color: #444;
}

.letter i {
    font-family: "Liberation Serif", serif;
    font-size: 14px;
}

.letter u {
    text-decoration-color: #4293d0;
}

.glyph-a,
.glyph-d {
    font-size: 8px;
    fill: #4293d0;
}

.glyph-d {
    fill: #444;
}

.glyph-abc {
    font-size: 8px;
    fill: #444;
}

.combo {
    display: flex;
    flex: none;
    height: 24px;
    margin-left: 1px;
    border: 1px solid #cdc9c5;
    border-radius: 4px;
    background: #fff;
    overflow: hidden;
}

.combo input {
    flex: 1;
    padding-left: 5px;
}

.combo button {
    width: 24px;
    border-left: 1px solid #dcd9d6;
    background: #f9f8f7;
    display: flex;
    align-items: center;
    justify-content: center;
}

.combo button::after,
.expand::after {
    content: "";
    border: 4px solid transparent;
    border-top-color: #333;
    border-bottom: none;
}

.combo-font {
    width: 138px;
    font-style: italic;
}

.combo-size {
    width: 68px;
    margin: 0 0 0 5px;
}

.combo-name {
    width: 108px;
    margin-left: 2px;
}

/* Work area */
.work {
    flex: 1;
    display: flex;
    min-height: 0;
}

.main {
    flex: 1;
    display: flex;
    flex-direction: column;
    min-width: 0;
}

.formula-bar {
    display: flex;
    align-items: center;
    height: 30px;
    padding-bottom: 2px;
}

.fx {
    font-family: "Liberation Serif", serif;
    font-size: 16px;
    line-height: 16px;
    color: #2a86cc;
}

.fx i + i {
    font-size: 13px;
    font-weight: bold;
}

.formula-bar .fx {
    width: 22px;
    margin-left: 3px;
}

.small-tool {
    display: flex;
    justify-content: center;
    width: 12px;
}

.small-tool + input,
.drop + .small-tool {
    margin-left: 3px;
}

.formula-input {
    flex: 1;
    height: 17px;
    padding-left: 4px;
    border: 1px solid #d4d1ce;
    background: #fff;
    color: #444;
}

.expand {
    display: flex;
    justify-content: center;
    width: 16px;
}

.sheet-area {
    flex: 1;
    display: flex;
    min-height: 0;
}

.sheet {
    position: relative;
    flex: 1;
    min-width: 0;
    overflow: hidden;
    background: #fff;
}

/* Cells */
.grid {
    table-layout: fixed;
    width: 100%;
    border-collapse: separate;
    border-spacing: 0;
    font-family: Lato, sans-serif;
    font-size: 8px;
    line-height: 12px;
    color: #222;
}

.c-head {
    width: 22px;
}

.c-a {
    width: 66px;
}

.c-b {
    width: 95px;
}

.c-data {
    width: 86px;
}

.c-empty {
    width: 41px;
}

.c-empty-wide {
    width: 42px;
}

.grid tr {
    height: 14px;
}

.grid .r-short {
    height: 13px;
}

.grid .r-title {
    height: 33px;
}

.grid .r-head {
    height: 20px;
}

.grid .data {
    height: 18px;
}

.grid .total {
    height: 21px;
}

.grid th {
    background: #e0dfdd;
    border-right: 1px solid #c2c0be;
    border-bottom: 1px solid #c2c0be;
    color: #444;
    font-family: "Noto Sans", sans-serif;
    font-size: 9px;
    font-weight: normal;
}

.letters th {
    font-size: 8px;
    border-top: 1px solid #c2c0be;
}

.letters td {
    background: #f6f5f3;
}

.grid th.sel {
    background: #3584e4;
    border-color: #2f74c8;
    color: #fff;
    font-weight: bold;
}

/* spell-checked words */
.grid s {
    text-decoration: underline wavy #d22 1px;
    text-decoration-skip-ink: none;
    text-underline-offset: 0;
}

.grid .title,
.grid .subtitle,
.grid .section {
    color: #fff;
    text-align: center;
}

.grid .title {
    position: relative;
    background: #10766e;
    font-size: 10px;
    font-weight: bold;
    border: 1px solid #d5e5fa;
    border-bottom-width: 2px;
    outline: 1px solid #3584e4;
}

/* fill handle of the selection */
.grid .title::after {
    content: "";
    position: absolute;
    right: -3px;
    bottom: -4px;
    width: 4px;
    height: 4px;
    background: #3584e4;
}

.grid .subtitle {
    background: #14b8a6;
    font-style: italic;
}

.grid .section {
    padding-left: 7px;
    background: #14b8a6;
    font-weight: bold;
    text-align: left;
}

.heads td,
.total td {
    background: #10766e;
    border-right: 1px solid #a9b9b7;
    border-bottom: 1px solid #a9b9b7;
    color: #fff;
    font-weight: bold;
    text-align: center;
    white-space: nowrap;
}

.heads td {
    border-top: 1px solid #a9b9b7;
}

.heads .big {
    font-size: 9px;
}

.data td,
.total td {
    padding-right: 1px;
    border-right: 1px solid #c4c8c8;
    border-bottom: 1px solid #c4c8c8;
    text-align: right;
}

.data:nth-child(even) td {
    background: #f0fdfa;
}

.data td:nth-child(2),
.total td:nth-child(2) {
    padding-left: 1px;
    text-align: left;
}

.total td {
    font-size: 9px;
}

.total td:nth-child(2) {
    font-size: 8px;
}

/* Chart */
.chart {
    position: absolute;
    left: 22px;
    top: 366px;
    font-family: Lato, sans-serif;
}

.chart-title {
    font-size: 14px;
    font-weight: bold;
    text-anchor: middle;
}

.chart-label {
    font-size: 8px;
    text-anchor: end;
}

.line-cost,
.line-gross {
    fill: none;
    stroke: #1d8078;
    stroke-width: 1.5px;
}

.line-gross {
    stroke: #20b5a5;
}

/* Scroll bars */
.vscroll {
    width: 9px;
    padding: 5px 1px 0 2px;
    background: #cdcdcd;
}

.vthumb {
    height: 48%;
    border-radius: 3px;
    background: #848484;
}

.hscroll {
    height: 10px;
    padding: 2px 0 2px 2px;
    margin-right: 10px;
    border-right: 2px solid #888;
    background: #cdcdcd;
}

.hthumb {
    width: 47%;
    height: 6px;
    border-radius: 3px;
    background: #7c7c7c;
}

/* Tabs */
.tabs {
    display: flex;
    height: 15px;
    padding-left: 6px;
    font-size: 8px;
}

.tab-nav {
    width: 69px;
}

.tab-add {
    width: 17px;
}

.tab {
    padding: 0 10px;
}

.tab-dark {
    padding: 0 11px;
    background: #10766e;
    color: #fff;
}

.tab-teal {
    background: #14b8a6;
    color: #123;
}

.tab-active {
    padding: 0 8px;
    background: #fff;
    border-bottom: 2px solid #35b86b;
    font-weight: bold;
}

.tab-yellow {
    padding: 0 9px;
    background: #eab308;
}

.tab-slate {
    background: #64748b;
    color: #fff;
}

/* Sidebar */
.sidebar {
    position: relative;
    display: flex;
    flex-direction: column;
    align-items: center;
    gap: 3px;
    width: 39px;
    padding-top: 2px;
    border-left: 1px solid #d0cecb;
}

.sidebar button {
    display: flex;
    align-items: center;
    justify-content: center;
    width: 26px;
    height: 26px;
}

.handle {
    position: absolute;
    left: -1px;
    top: 269px;
    width: 5px;
    height: 50px;
    background: #a3a3a3;
}

.handle::after {
    content: "";
    position: absolute;
    left: 1px;
    top: 22px;
    border: 3px solid transparent;
    border-left-color: #fff;
    border-right: none;
}

/* Status bar */
.status {
    display: flex;
    align-items: center;
    height: 18px;
    border-top: 1px solid #d0cecb;
    font-size: 8px;
}

.status > div {
    display: flex;
    align-items: center;
    height: 13px;
    border-right: 1px solid #dedcd9;
}

.status .save-icon {
    margin: 0 9px 0 6px;
}

.status .st-sheet {
    width: 171px;
}

.status .st-selected {
    width: 209px;
    padding-left: 6px;
}

.status .st-style {
    flex: 3;
    padding-left: 6px;
}

.status .st-lang {
    flex: 2;
    justify-content: center;
}

.status .st-insert {
    width: 46px;
}

.status .st-mode {
    width: 31px;
    padding-left: 7px;
}

.status .st-small {
    width: 20px;
}

.status .st-sum {
    width: 176px;
    justify-content: center;
}

.status .st-zoom {
    width: 94px;
    padding-left: 3px;
    gap: 3px;
}

.status .st-percent {
    width: 33px;
    padding-left: 6px;
    border: none;
}

.st-zoom input {
    flex: 1;
    height: 10px;
    appearance: none;
    background: linear-gradient(#aaa, #aaa) center / 100% 1px no-repeat;
}

.st-zoom input::-webkit-slider-thumb {
    appearance: none;
    width: 3px;
    height: 7px;
    border: 1px solid #555;
    background: #fff;
}
```
